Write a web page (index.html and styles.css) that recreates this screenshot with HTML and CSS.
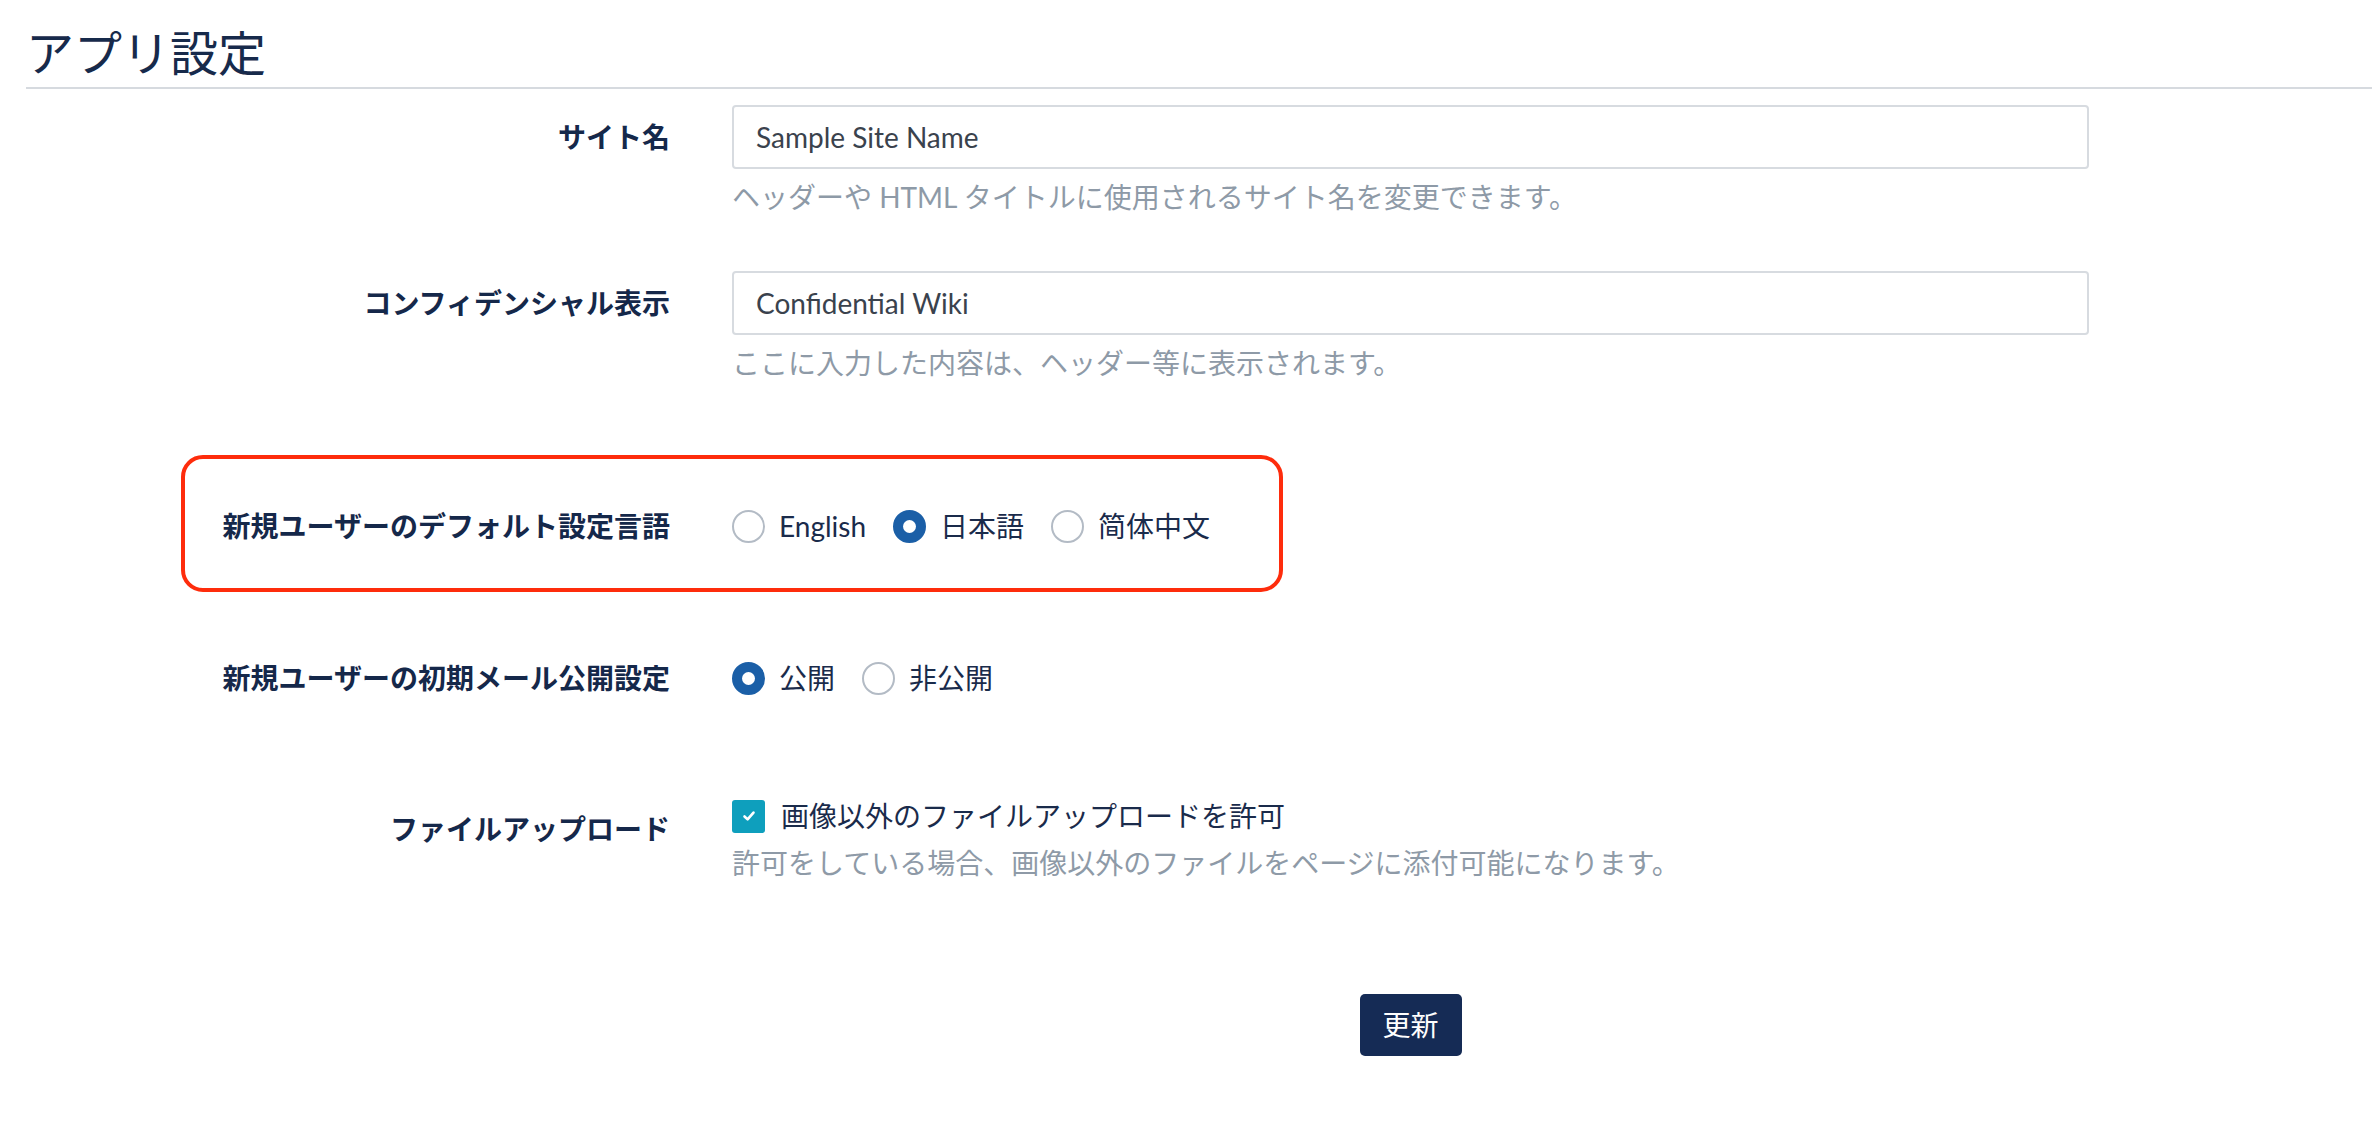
FILE: index.html
```html
<!DOCTYPE html>
<html lang="ja">
<head>
<meta charset="utf-8">
<title>アプリ設定</title>
<link rel="stylesheet" href="styles.css">
</head>
<body>
<div class="page">
  <h1 class="title">アプリ設定</h1>

  <form class="form">
    <div class="row row-site">
      <label class="label">サイト名</label>
      <div class="control">
        <input class="text-input" type="text" value="Sample Site Name">
        <p class="help">ヘッダーや HTML タイトルに使用されるサイト名を変更できます。</p>
      </div>
    </div>

    <div class="row row-conf">
      <label class="label">コンフィデンシャル表示</label>
      <div class="control">
        <input class="text-input" type="text" value="Confidential Wiki">
        <p class="help">ここに入力した内容は、ヘッダー等に表示されます。</p>
      </div>
    </div>

    <div class="row row-lang highlight">
      <label class="label">新規ユーザーのデフォルト設定言語</label>
      <div class="control options">
        <label class="option"><span class="radio"></span><span>English</span></label>
        <label class="option"><span class="radio checked"></span><span>日本語</span></label>
        <label class="option"><span class="radio"></span><span>简体中文</span></label>
      </div>
    </div>

    <div class="row row-mail">
      <label class="label">新規ユーザーの初期メール公開設定</label>
      <div class="control options">
        <label class="option"><span class="radio checked"></span><span>公開</span></label>
        <label class="option"><span class="radio"></span><span>非公開</span></label>
      </div>
    </div>

    <div class="row row-file">
      <label class="label label-file">ファイルアップロード</label>
      <div class="control">
        <label class="option"><span class="checkbox"><svg viewBox="0 0 16 16" width="16" height="16"><path d="M3.5 8.5 L6.6 11.4 L12.5 4.6" fill="none" stroke="#fff" stroke-width="2.6" stroke-linecap="round" stroke-linejoin="round"/></svg></span><span>画像以外のファイルアップロードを許可</span></label>
        <p class="help help-file">許可をしている場合、画像以外のファイルをページに添付可能になります。</p>
      </div>
    </div>

    <div class="row row-submit">
      <div></div>
      <div class="control submit-cell">
        <button type="button" class="btn">更新</button>
      </div>
    </div>
  </form>
</div>
</body>
</html>
```

FILE: styles.css
```css
html, body {
  margin: 0;
  padding: 0;
  background: #ffffff;
}

body {
  font-family: "Lato", "Noto Sans CJK JP", sans-serif;
  color: #16284a;
}

.page {
  padding-left: 26px;
}

.title {
  margin: 0;
  padding: 21px 0 2px;
  font-size: 48px;
  line-height: 64px;
  font-weight: 400;
  color: #172a4b;
  border-bottom: 2px solid #d6dadf;
}

.form {
  display: block;
}

.row {
  display: grid;
  grid-template-columns: 644px 1357px;
  column-gap: 62px;
}

.row-site { margin-top: 16px; }
.row-conf { margin-top: 53px; }
.row-lang { margin-top: 110px; }
.row-mail { margin-top: 99px; }
.row-file { margin-top: 96px; }
.row-submit { margin-top: 110px; }

.label {
  display: block;
  text-align: right;
  font-size: 28px;
  line-height: 42px;
  font-weight: 700;
  padding-top: 11px;
  color: #15284a;
}

.label-file {
  padding-top: 13px;
}

.control {
  min-width: 0;
}

.text-input {
  display: block;
  box-sizing: border-box;
  width: 100%;
  height: 64px;
  margin: 0;
  padding: 0 22px;
  border: 2px solid #d7dbe0;
  border-radius: 4px;
  font-family: "Lato", "Noto Sans CJK JP", sans-serif;
  font-size: 28px;
  color: #3a424d;
  background: #ffffff;
  outline: none;
}

.help {
  margin: 7px 0 0;
  font-size: 28px;
  line-height: 42px;
  color: #8e9aa7;
}

.help-file {
  margin-top: 5px;
}

.options {
  display: flex;
  align-items: center;
  padding-top: 11px;
  height: 42px;
}

.option {
  display: inline-flex;
  align-items: center;
  gap: 14px;
  margin-right: 27px;
  font-size: 28px;
  line-height: 42px;
  color: #1a2b4b;
}

.radio {
  box-sizing: border-box;
  width: 33px;
  height: 33px;
  border-radius: 50%;
  border: 2px solid #b3bbc5;
  background: #ffffff;
  flex: none;
  position: relative;
}

.radio.checked {
  border-color: #1b5fa7;
  background: #1b5fa7;
}

.radio.checked::after {
  content: "";
  position: absolute;
  left: 50%;
  top: 50%;
  width: 13px;
  height: 13px;
  margin: -6.5px 0 0 -6.5px;
  border-radius: 50%;
  background: #ffffff;
}

.checkbox {
  box-sizing: border-box;
  width: 33px;
  height: 33px;
  border-radius: 3px;
  background: #0e9fbd;
  flex: none;
  display: flex;
  align-items: center;
  justify-content: center;
  margin-right: 2px;
}

.highlight {
  position: relative;
}

.highlight::before {
  content: "";
  position: absolute;
  left: 155px;
  top: -39px;
  width: 1102px;
  height: 137px;
  box-sizing: border-box;
  border: 4px solid #fe2c0c;
  border-radius: 22px;
  pointer-events: none;
}

.submit-cell {
  display: flex;
  justify-content: center;
}

.btn {
  width: 102px;
  height: 62px;
  margin: 0;
  padding: 0;
  border: none;
  border-radius: 5px;
  background: #152b55;
  color: #ffffff;
  font-family: "Lato", "Noto Sans CJK JP", sans-serif;
  font-size: 28px;
  line-height: 42px;
  cursor: pointer;
}
```
